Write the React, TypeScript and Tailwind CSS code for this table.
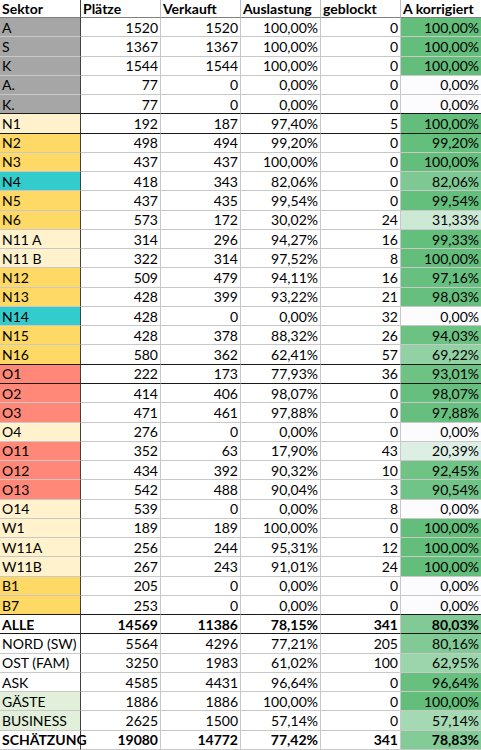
import React from "react";

type Row = {
  s: string;
  p: string;
  v: string;
  a: string;
  g: string;
  k: string;
  kv: number;
  bg: string;
  bold?: boolean;
};

const GRAY = "bg-[#a6a6a6]";
const LY = "bg-[#fff2cc]";
const GOLD = "bg-[#ffd966]";
const CYAN = "bg-[#33cccc]";
const SAL = "bg-[#ff8878]";
const LG = "bg-[#e2efda]";
const W = "bg-white";

const rows: Row[] = [
  { s: "A", p: "1520", v: "1520", a: "100,00%", g: "0", k: "100,00%", kv: 100, bg: GRAY },
  { s: "S", p: "1367", v: "1367", a: "100,00%", g: "0", k: "100,00%", kv: 100, bg: GRAY },
  { s: "K", p: "1544", v: "1544", a: "100,00%", g: "0", k: "100,00%", kv: 100, bg: GRAY },
  { s: "A.", p: "77", v: "0", a: "0,00%", g: "0", k: "0,00%", kv: 0, bg: GRAY },
  { s: "K.", p: "77", v: "0", a: "0,00%", g: "0", k: "0,00%", kv: 0, bg: GRAY },
  { s: "N1", p: "192", v: "187", a: "97,40%", g: "5", k: "100,00%", kv: 100, bg: LY },
  { s: "N2", p: "498", v: "494", a: "99,20%", g: "0", k: "99,20%", kv: 99.2, bg: GOLD },
  { s: "N3", p: "437", v: "437", a: "100,00%", g: "0", k: "100,00%", kv: 100, bg: GOLD },
  { s: "N4", p: "418", v: "343", a: "82,06%", g: "0", k: "82,06%", kv: 82.06, bg: CYAN },
  { s: "N5", p: "437", v: "435", a: "99,54%", g: "0", k: "99,54%", kv: 99.54, bg: GOLD },
  { s: "N6", p: "573", v: "172", a: "30,02%", g: "24", k: "31,33%", kv: 31.33, bg: GOLD },
  { s: "N11 A", p: "314", v: "296", a: "94,27%", g: "16", k: "99,33%", kv: 99.33, bg: LY },
  { s: "N11 B", p: "322", v: "314", a: "97,52%", g: "8", k: "100,00%", kv: 100, bg: LY },
  { s: "N12", p: "509", v: "479", a: "94,11%", g: "16", k: "97,16%", kv: 97.16, bg: GOLD },
  { s: "N13", p: "428", v: "399", a: "93,22%", g: "21", k: "98,03%", kv: 98.03, bg: GOLD },
  { s: "N14", p: "428", v: "0", a: "0,00%", g: "32", k: "0,00%", kv: 0, bg: CYAN },
  { s: "N15", p: "428", v: "378", a: "88,32%", g: "26", k: "94,03%", kv: 94.03, bg: GOLD },
  { s: "N16", p: "580", v: "362", a: "62,41%", g: "57", k: "69,22%", kv: 69.22, bg: GOLD },
  { s: "O1", p: "222", v: "173", a: "77,93%", g: "36", k: "93,01%", kv: 93.01, bg: SAL },
  { s: "O2", p: "414", v: "406", a: "98,07%", g: "0", k: "98,07%", kv: 98.07, bg: SAL },
  { s: "O3", p: "471", v: "461", a: "97,88%", g: "0", k: "97,88%", kv: 97.88, bg: SAL },
  { s: "O4", p: "276", v: "0", a: "0,00%", g: "0", k: "0,00%", kv: 0, bg: LY },
  { s: "O11", p: "352", v: "63", a: "17,90%", g: "43", k: "20,39%", kv: 20.39, bg: SAL },
  { s: "O12", p: "434", v: "392", a: "90,32%", g: "10", k: "92,45%", kv: 92.45, bg: SAL },
  { s: "O13", p: "542", v: "488", a: "90,04%", g: "3", k: "90,54%", kv: 90.54, bg: SAL },
  { s: "O14", p: "539", v: "0", a: "0,00%", g: "8", k: "0,00%", kv: 0, bg: LY },
  { s: "W1", p: "189", v: "189", a: "100,00%", g: "0", k: "100,00%", kv: 100, bg: LY },
  { s: "W11A", p: "256", v: "244", a: "95,31%", g: "12", k: "100,00%", kv: 100, bg: LY },
  { s: "W11B", p: "267", v: "243", a: "91,01%", g: "24", k: "100,00%", kv: 100, bg: LY },
  { s: "B1", p: "205", v: "0", a: "0,00%", g: "0", k: "0,00%", kv: 0, bg: GOLD },
  { s: "B7", p: "253", v: "0", a: "0,00%", g: "0", k: "0,00%", kv: 0, bg: GOLD },
  { s: "ALLE", p: "14569", v: "11386", a: "78,15%", g: "341", k: "80,03%", kv: 80.03, bg: W, bold: true },
  { s: "NORD (SW)", p: "5564", v: "4296", a: "77,21%", g: "205", k: "80,16%", kv: 80.16, bg: W },
  { s: "OST (FAM)", p: "3250", v: "1983", a: "61,02%", g: "100", k: "62,95%", kv: 62.95, bg: W },
  { s: "ASK", p: "4585", v: "4431", a: "96,64%", g: "0", k: "96,64%", kv: 96.64, bg: W },
  { s: "GÄSTE", p: "1886", v: "1886", a: "100,00%", g: "0", k: "100,00%", kv: 100, bg: LG },
  { s: "BUSINESS", p: "2625", v: "1500", a: "57,14%", g: "0", k: "57,14%", kv: 57.14, bg: LG },
  { s: "SCHÄTZUNG", p: "19080", v: "14772", a: "77,42%", g: "341", k: "78,83%", kv: 78.83, bg: W, bold: true },
];

const blackBottom = new Set([4, 5, 17, 18, 30, 31]);

function scale(v: number): string {
  const t = Math.max(0, Math.min(1, v / 100));
  const r = Math.round(252 + (99 - 252) * t);
  const g = Math.round(252 + (190 - 252) * t);
  const b = Math.round(255 + (123 - 255) * t);
  return `rgb(${r},${g},${b})`;
}

const headers = ["Sektor", "Plätze", "Verkauft", "Auslastung", "geblockt", "A korrigiert"];

export default function App() {
  return (
    <div
      className="w-[481px] h-[750px] bg-white text-[#000] text-[14px] overflow-hidden grid grid-cols-[81px_80px_80px_80px_80px_80px] grid-rows-[18px_repeat(38,minmax(0,1fr))]"
      style={{ fontFamily: "Lato, 'Noto Sans', sans-serif" }}
    >
      {headers.map((h, i) => (
        <div
          key={h}
          className={`flex items-center pl-[2px] pt-[1px] font-bold leading-none border-b border-[#7f7f7f] ${
            i === 0 ? "border-r border-r-[#404040]" : i < 5 ? "border-r border-r-[#bfbfbf]" : ""
          }`}
        >
          {h}
        </div>
      ))}
      {rows.map((r, idx) => {
        const bb = blackBottom.has(idx) ? "border-b-[#1a1a1a]" : "border-b-[#c8c8c8]";
        const fw = r.bold ? "font-bold" : "";
        const num = `flex items-center justify-end pr-[2px] pt-[1px] leading-none border-b border-r border-r-[#c8c8c8] ${bb} ${fw}`;
        return (
          <React.Fragment key={idx}>
            <div
              className={`flex items-center pl-[2px] pt-[1px] leading-none border-b border-r border-r-[#404040] ${bb} ${r.bg} ${fw}`}
            >
              {r.s}
            </div>
            <div className={num}>{r.p}</div>
            <div className={num}>{r.v}</div>
            <div className={num}>{r.a}</div>
            <div className={num}>{r.g}</div>
            <div
              className={`flex items-center justify-end pr-[2px] pt-[1px] leading-none border-b ${bb} ${fw}`}
              style={{ backgroundColor: scale(r.kv) }}
            >
              {r.k}
            </div>
          </React.Fragment>
        );
      })}
    </div>
  );
}
